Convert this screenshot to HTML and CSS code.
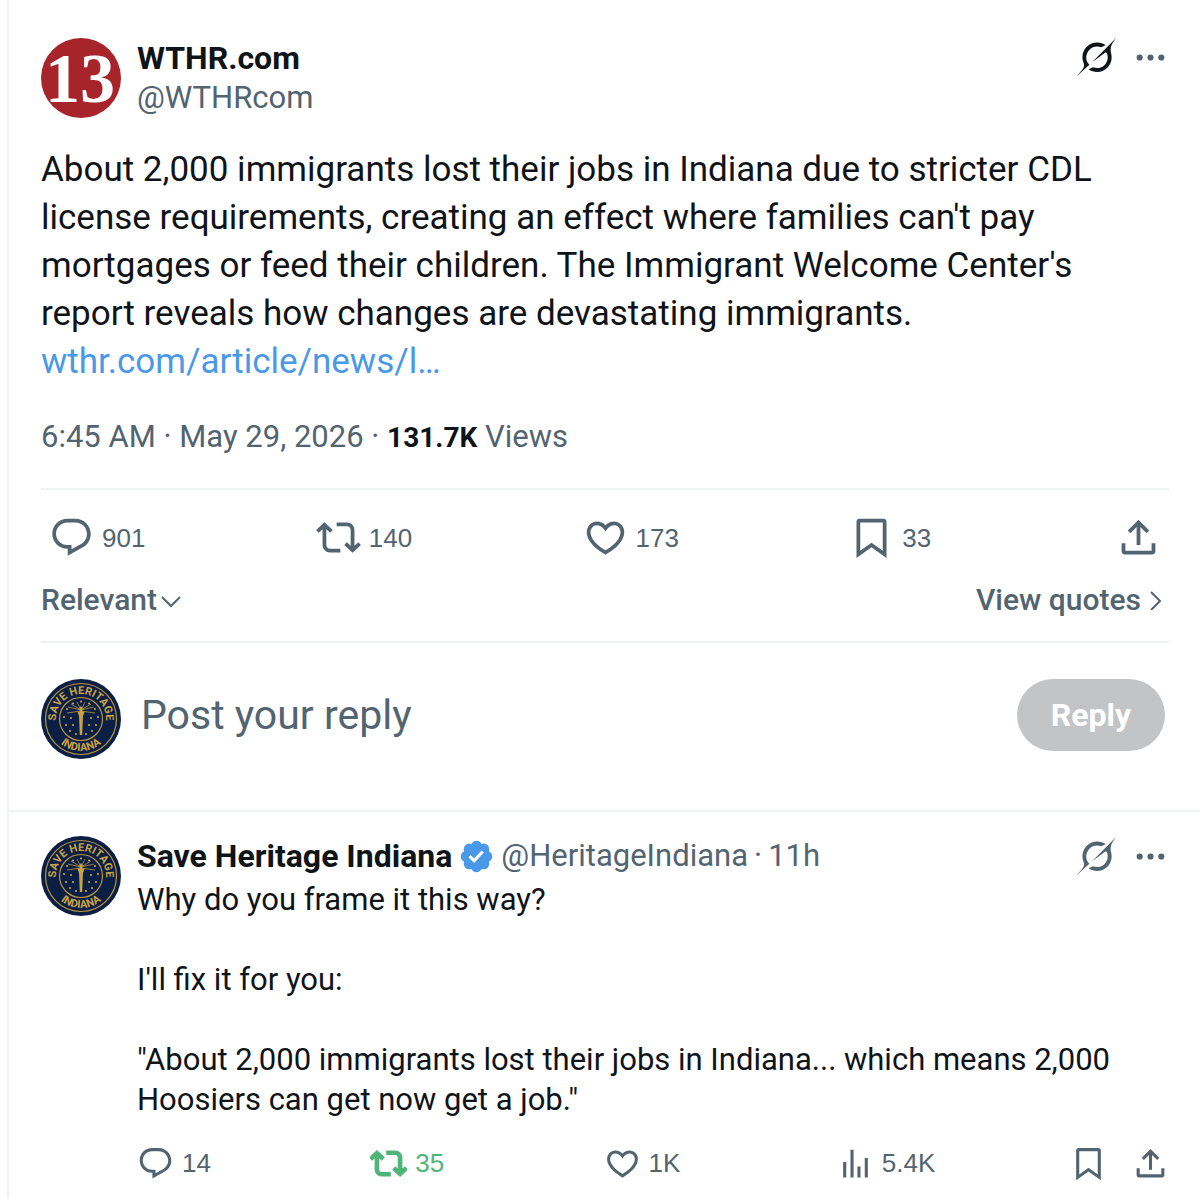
FILE: index.html
```html
<!DOCTYPE html>
<html lang="en">

<head>
    <meta charset="utf-8">
    <meta name="viewport" content="width=device-width, initial-scale=1">
    <title>WTHR.com: About 2,000 immigrants lost their jobs in Indiana</title>
    <link rel="stylesheet" href="styles.css">
</head>

<body>
    <!-- shared icons -->
    <svg class="sprite" aria-hidden="true">
        <symbol id="reply" viewBox="0 0 24 24">
            <path d="M1.751 10c0-4.42 3.584-8 8.005-8h4.366c4.49 0 8.129 3.64 8.129 8.13 0 2.96-1.607 5.68-4.196 7.11l-8.054 4.46v-3.69h-.067c-4.49.1-8.183-3.51-8.183-8.01zm8.005-6c-3.317 0-6.005 2.69-6.005 6 0 3.37 2.77 6.08 6.138 6.01l.351-.01h1.761v2.3l5.087-2.81c1.951-1.08 3.163-3.13 3.163-5.36 0-3.39-2.744-6.13-6.129-6.13H9.756z" />
        </symbol>
        <symbol id="repost" viewBox="0 0 24 24">
            <path d="M4.5 3.88l4.432 4.14-1.364 1.46L5.5 7.55V16c0 1.1.896 2 2 2H13v2H7.5c-2.209 0-4-1.79-4-4V7.55L1.432 9.48.068 8.02 4.5 3.88zM16.5 6H11V4h5.5c2.209 0 4 1.79 4 4v8.45l2.068-1.93 1.364 1.46-4.432 4.14-4.432-4.14 1.364-1.46 2.068 1.93V8c0-1.1-.896-2-2-2z" />
        </symbol>
        <symbol id="like" viewBox="0 0 24 24">
            <path d="M16.697 5.5c-1.222-.06-2.679.51-3.89 2.16l-.805 1.09-.806-1.09C9.984 6.01 8.526 5.44 7.304 5.5c-1.243.07-2.349.78-2.91 1.91-.552 1.12-.633 2.78.479 4.82 1.074 1.97 3.257 4.27 7.129 6.61 3.87-2.34 6.052-4.64 7.126-6.61 1.111-2.04 1.03-3.7.477-4.82-.561-1.13-1.666-1.84-2.908-1.91zm4.187 7.69c-1.351 2.48-4.001 5.12-8.379 7.67l-.503.3-.504-.3c-4.379-2.55-7.029-5.19-8.382-7.67-1.36-2.5-1.41-4.86-.514-6.67.887-1.79 2.647-2.91 4.601-3.01 1.651-.09 3.368.56 4.798 2.01 1.429-1.45 3.146-2.1 4.796-2.01 1.954.1 3.714 1.22 4.601 3.01.896 1.81.846 4.17-.514 6.67z" />
        </symbol>
        <symbol id="bookmark" viewBox="0 0 24 24">
            <path fill-rule="evenodd" d="M4 3.5C4 2.67 4.67 2 5.5 2h13c.83 0 1.5.67 1.5 1.5v19.44l-8-5.71-8 5.71V3.5zM6 4v15.06l6-4.29 6 4.29V4H6z" />
        </symbol>
        <symbol id="share" viewBox="0 0 24 24">
            <path d="M12 2.59l5.7 5.7-1.41 1.42L13 6.41V16h-2V6.41l-3.3 3.3-1.41-1.42L12 2.59zM21 15v4.5c0 .83-.67 1.5-1.5 1.5h-15C3.67 21 3 20.33 3 19.5V15h2v4h14v-4h2z" />
        </symbol>
        <symbol id="views" viewBox="0 0 24 24">
            <path d="M8.75 21V3h2v18h-2zM18 21V8.5h2V21h-2zM4 21l.004-10h2L6 21H4zm9.248 0v-7h2v7h-2z" />
        </symbol>
        <symbol id="more" viewBox="0 0 24 24">
            <circle cx="5" cy="12" r="2" />
            <circle cx="12" cy="12" r="2" />
            <circle cx="19" cy="12" r="2" />
        </symbol>
        <symbol id="grok" viewBox="0 0 33 32">
            <path d="M12.745 20.54l10.97-8.19c.539-.4 1.307-.244 1.564.38 1.349 3.288.746 7.241-1.938 9.955-2.683 2.714-6.417 3.31-9.83 1.954l-3.728 1.745c5.347 3.697 11.84 2.782 15.898-1.324 3.219-3.255 4.216-7.692 3.284-11.693l.008.009c-1.351-5.878.332-8.227 3.782-13.031L33 0l-4.54 4.59v-.014L12.743 20.544m-2.263 1.987c-3.837-3.707-3.175-9.446.1-12.755 2.42-2.449 6.388-3.448 9.852-1.979l3.72-1.737c-.67-.49-1.53-1.017-2.515-1.387-4.455-1.854-9.789-.931-13.41 2.728-3.483 3.523-4.579 8.94-2.697 13.561 1.405 3.454-.899 5.898-3.22 8.364C1.49 30.2.666 31.074 0 32l10.478-9.466" />
        </symbol>
        <symbol id="verified" viewBox="0 0 22 22">
            <path d="M20.396 11c-.018-.646-.215-1.275-.57-1.816-.354-.54-.852-.972-1.438-1.246.223-.607.27-1.264.14-1.897-.131-.634-.437-1.218-.882-1.687-.47-.445-1.053-.75-1.687-.882-.633-.13-1.29-.083-1.897.14-.273-.587-.704-1.086-1.245-1.44S11.647 1.62 11 1.604c-.646.017-1.273.213-1.813.568s-.969.854-1.24 1.44c-.608-.223-1.267-.272-1.902-.14-.635.13-1.22.436-1.69.882-.445.47-.749 1.055-.878 1.688-.13.633-.08 1.29.144 1.896-.587.274-1.087.705-1.443 1.245-.356.54-.555 1.17-.574 1.817.02.647.218 1.276.574 1.817.356.54.856.972 1.443 1.245-.224.606-.274 1.263-.144 1.896.13.634.433 1.218.877 1.688.47.443 1.054.747 1.687.878.633.132 1.29.084 1.897-.136.274.586.705 1.084 1.246 1.439.54.354 1.17.551 1.816.569.647-.016 1.276-.213 1.817-.567s.972-.854 1.245-1.44c.604.239 1.266.296 1.903.164.636-.132 1.22-.447 1.68-.907.46-.46.776-1.044.908-1.681s.075-1.299-.165-1.903c.586-.274 1.084-.705 1.439-1.246.354-.54.551-1.17.569-1.816zM9.662 14.85l-3.429-3.428 1.293-1.302 2.072 2.072 4.4-4.794 1.347 1.246z" />
        </symbol>
    </svg>

    <main class="column">
        <article class="post">
            <header class="post-header">
                <svg class="avatar" viewBox="0 0 80 80" role="img" aria-label="WTHR.com">
                    <circle cx="40" cy="40" r="40" fill="#a6242a" />
                    <text class="logo-text" x="39" y="64">13</text>
                </svg>
                <div class="author">
                    <a class="name" href="#">WTHR.com</a>
                    <a class="handle" href="#">@WTHRcom</a>
                </div>
                <div class="tools">
                    <button aria-label="Explain this post"><svg class="grok dark"><use href="#grok" /></svg></button>
                    <button aria-label="More"><svg class="more"><use href="#more" /></svg></button>
                </div>
            </header>

            <p class="post-text">About 2,000 immigrants lost their jobs in Indiana due to stricter CDL license requirements, creating an effect where families can't pay mortgages or feed their children. The Immigrant Welcome Center's report reveals how changes are devastating immigrants. <a href="#">wthr.com/article/news/l…</a></p>

            <p class="meta">6:45 AM · May 29, 2026 · <b>131.7K</b> Views</p>

            <div class="actions">
                <button aria-label="Reply"><svg><use href="#reply" /></svg>901</button>
                <button aria-label="Repost"><svg><use href="#repost" /></svg>140</button>
                <button aria-label="Like"><svg><use href="#like" /></svg>173</button>
                <button aria-label="Bookmark"><svg><use href="#bookmark" /></svg>33</button>
                <button aria-label="Share"><svg><use href="#share" /></svg></button>
            </div>

            <div class="sort">
                <button>Relevant<svg viewBox="0 0 20 20"><path d="M1 7l9 9 9-9" /></svg></button>
                <a href="#">View quotes<svg viewBox="0 0 20 20"><path d="M6 2l9 9-9 9" /></svg></a>
            </div>

            <form class="reply-form">
                <svg class="avatar" viewBox="0 0 80 80">
                    <g id="seal">
                        <circle cx="40" cy="40" r="40" fill="#0b1f45" />
                        <g fill="none" stroke="#b9953f">
                            <circle cx="40" cy="40" r="35.500" stroke-width="1.2" />
                            <circle cx="40" cy="40" r="21.500" stroke-width="1.2" />
                            <path stroke-width=".8" d="M40 31L27 28M40 31l-10-6M40 31l-4-8M40 31l4-8M40 31l10-6M40 31l13-3M40 32l-14 2M40 32l14 2" />
                        </g>
                        <path id="arcTop" d="M15 40a25 25 0 0 1 50 0" fill="none" />
                        <path id="arcBottom" d="M8 40a32 32 0 0 0 64 0" fill="none" />
                        <g class="seal-text">
                            <text><textPath href="#arcTop" startOffset="50%">SAVE HERITAGE</textPath></text>
                            <text><textPath href="#arcBottom" startOffset="50%">INDIANA</textPath></text>
                        </g>
                        <g fill="#c9a244">
                            <path d="M40 27c2 2 2 4 1 5l2.500 1-1.500 4-.8 19h-2.400L38 37l-1.500-4 2.500-1c-1-1-1-3 1-5z" />
                            <circle cx="40" cy="22.500" r="1.100" />
                            <circle cx="32" cy="24.500" r="1.100" />
                            <circle cx="48" cy="24.500" r="1.100" />
                            <circle cx="26" cy="30" r="1.100" />
                            <circle cx="54" cy="30" r="1.100" />
                            <circle cx="23" cy="38" r="1.100" />
                            <circle cx="57" cy="38" r="1.100" />
                            <circle cx="30" cy="39" r="1.100" />
                            <circle cx="50" cy="39" r="1.100" />
                            <circle cx="25" cy="46" r="1.100" />
                            <circle cx="55" cy="46" r="1.100" />
                            <circle cx="32" cy="46" r="1.100" />
                            <circle cx="48" cy="46" r="1.100" />
                            <circle cx="29" cy="52" r="1.100" />
                            <circle cx="51" cy="52" r="1.100" />
                            <circle cx="35" cy="55" r="1.100" />
                            <circle cx="45" cy="55" r="1.100" />
                        </g>
                    </g>
                </svg>
                <input type="text" placeholder="Post your reply" aria-label="Post your reply">
                <button type="submit" disabled>Reply</button>
            </form>
        </article>

        <article class="comment">
            <svg class="avatar" viewBox="0 0 80 80"><use href="#seal" /></svg>
            <div class="comment-body">
                <header class="comment-header">
                    <a class="name" href="#">Save Heritage Indiana</a>
                    <svg class="verified"><use href="#verified" /></svg>
                    <a class="handle" href="#">@HeritageIndiana</a>
                    <span class="handle">·</span>
                    <a class="handle" href="#">11h</a>
                    <div class="tools">
                        <button aria-label="Explain this post"><svg class="grok"><use href="#grok" /></svg></button>
                        <button aria-label="More"><svg class="more"><use href="#more" /></svg></button>
                    </div>
                </header>
                <div class="comment-text">
                    <p>Why do you frame it this way?</p>
                    <p>I'll fix it for you:</p>
                    <p>"About 2,000 immigrants lost their jobs in Indiana... which means 2,000 Hoosiers can get now get a job."</p>
                </div>
                <div class="actions small">
                    <button aria-label="Reply"><svg><use href="#reply" /></svg>14</button>
                    <button class="reposted" aria-label="Undo repost"><svg><use href="#repost" /></svg>35</button>
                    <button aria-label="Like"><svg><use href="#like" /></svg>1K</button>
                    <button aria-label="Views"><svg><use href="#views" /></svg>5.4K</button>
                    <button aria-label="Bookmark"><svg><use href="#bookmark" /></svg></button>
                    <button aria-label="Share"><svg><use href="#share" /></svg></button>
                </div>
            </div>
        </article>
    </main>
</body>

</html>
```

FILE: styles.css
```css
* {
    box-sizing: border-box;
}

body {
    margin: 0;
    background-color: #fff;
    color: #0f1419;
    font-family: Roboto, "Liberation Sans", sans-serif;
    font-size: 31px;
    line-height: 40px;
}

p {
    margin: 0;
}

a {
    color: inherit;
    text-decoration: none;
}

button {
    display: flex;
    align-items: center;
    padding: 0;
    border: 0;
    background: none;
    color: #536471;
    font: inherit;
    cursor: pointer;
}

svg {
    display: block;
    flex: none;
    fill: currentColor;
}

.sprite {
    position: absolute;
    width: 0;
    height: 0;
}

.column {
    min-height: 100vh;
    margin-left: 7px;
    border-left: 2px solid #eff3f4;
}

.post {
    padding: 38px 31px 0 32px;
    border-bottom: 2px solid #eff3f4;
}

.avatar {
    width: 80px;
    height: 80px;
}

.logo-text {
    fill: #fff;
    font-family: "Liberation Serif", serif;
    font-size: 70px;
    font-weight: bold;
    text-anchor: middle;
}

.seal-text {
    fill: #c9a244;
    font-size: 11px;
    font-weight: bold;
    text-anchor: middle;
}

.post-header {
    display: flex;
    gap: 16px;
}

.author {
    display: flex;
    flex: 1;
    flex-direction: column;
    align-items: flex-start;
}

.name {
    font-size: 32px;
    font-weight: 700;
}

.handle,
.tools,
.meta {
    color: #536471;
}

.tools {
    display: flex;
    align-items: center;
    gap: 16px;
    height: 38px;
    margin-left: auto;
}

.grok {
    width: 39px;
    height: 38px;
}

.dark {
    color: #0f1419;
}

.more {
    width: 37px;
    height: 37px;
}

.post-text {
    margin-top: 28px;
    font-size: 35px;
    line-height: 48px;
}

.post-text a {
    color: #4a99e9;
}

.meta {
    margin-top: 31px;
    padding-bottom: 30px;
    border-bottom: 2px solid #eff3f4;
}

.meta b {
    color: #0f1419;
    font-size: 28px;
}

.actions {
    display: grid;
    grid-template-columns: repeat(4, 1fr) auto;
    padding: 25px 8px 0;
    font-family: "Liberation Sans", sans-serif;
    font-size: 26px;
}

.actions button {
    gap: 8px;
}

.actions svg {
    width: 45px;
    height: 45px;
}

.sort {
    display: flex;
    justify-content: space-between;
    padding: 20px 4px 21px 0;
    border-bottom: 2px solid #eff3f4;
    color: #536471;
    font-size: 30px;
    font-weight: 500;
}

.sort a,
.sort button {
    display: flex;
    align-items: center;
    gap: 4px;
}

.sort svg {
    width: 20px;
    height: 20px;
    fill: none;
    stroke: currentColor;
    stroke-width: 2;
}

.reply-form {
    display: flex;
    align-items: flex-start;
    gap: 20px;
    padding: 36px 4px 51px 0;
}

.reply-form input {
    flex: 1;
    min-width: 0;
    height: 72px;
    padding: 0;
    border: 0;
    outline: 0;
    background: none;
    color: #0f1419;
    font: inherit;
    font-size: 41px;
}

.reply-form input::placeholder {
    color: #536471;
    opacity: 1;
}

.reply-form button {
    height: 72px;
    padding: 0 34px;
    border-radius: 36px;
    background-color: #c3c4c5;
    color: #fff;
    font-size: 32px;
    font-weight: 700;
    cursor: default;
}

.comment {
    display: flex;
    gap: 16px;
    padding: 24px 31px 0 32px;
}

.comment-body {
    flex: 1;
    min-width: 0;
}

.comment-header {
    display: flex;
    align-items: center;
    gap: 6px;
}

.verified {
    width: 37px;
    height: 37px;
    color: #4a99e9;
}

.comment-text {
    display: grid;
    gap: 40px;
    padding-top: 4px;
}

.small {
    grid-template-columns: repeat(4, 1fr) auto auto;
    padding: 23px 0 16px;
}

.small svg {
    width: 37px;
    height: 37px;
}

.small button:last-child {
    margin-left: 25px;
}

.small .reposted {
    color: #4fb67a;
}

/* the active repost icon is drawn bolder */
.reposted svg {
    stroke: currentColor;
    stroke-width: 1;
}
```
